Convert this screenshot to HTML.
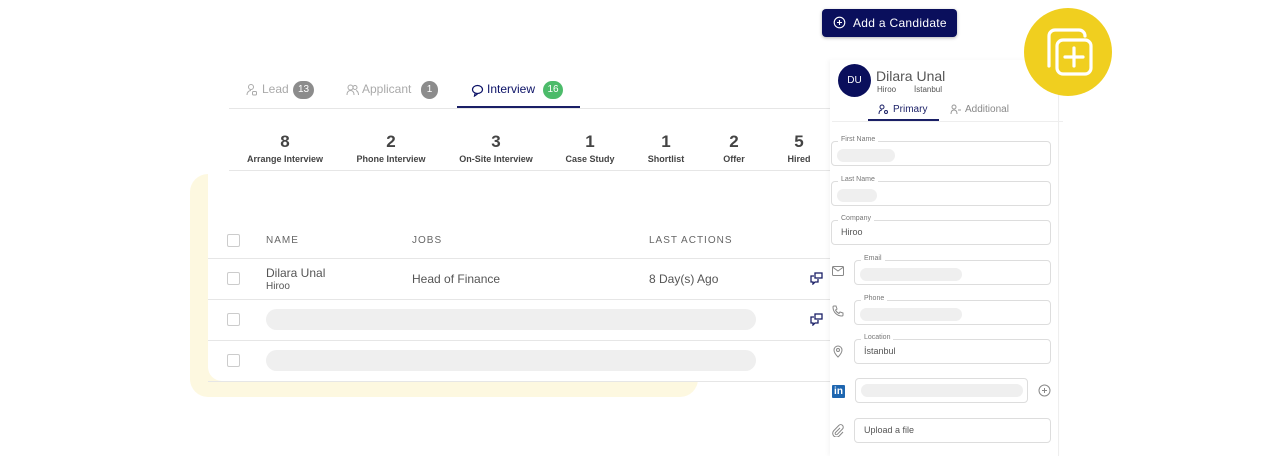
<!DOCTYPE html>
<html><head><meta charset="utf-8"><style>
*{margin:0;padding:0;box-sizing:border-box}
body{width:1270px;height:456px;background:#fff;position:relative;overflow:hidden;font-family:"Liberation Sans",sans-serif;color:#444}
.a{position:absolute}
.yl{left:190px;top:174px;width:508px;height:223px;background:#fdf8e0;border-radius:18px}
.card{left:208px;top:0;width:622px;height:381px;background:#fff;border-bottom-left-radius:14px}
.hl{height:1px;background:#e6e6e6}
.tab{font-size:12px;color:#aaa;top:82px}
.badge{top:81px;height:18px;border-radius:9px;color:#fff;font-size:10px;text-align:center;line-height:18px}
.num{font-size:17px;font-weight:bold;color:#444;top:132px;width:120px;text-align:center}
.lab{font-size:9px;font-weight:bold;color:#444;top:154px;width:120px;text-align:center}
.cb{width:13px;height:13px;border:1px solid #ccc;border-radius:2px}
.th{font-size:10px;letter-spacing:1px;color:#666;top:235px}
.pill{background:#efefef;border-radius:11px}
.fld{border:1px solid #ddd;border-radius:4px;height:25px}
.fl{font-size:7px;color:#777;background:#fff;padding:0 3px;top:-6px;left:6px;position:absolute}
.sk{position:absolute;background:#efefef;border-radius:7px;height:13px;top:7px}
</style></head><body>
<div class="a yl"></div>
<div class="a card"></div>

<!-- tabs -->
<svg class="a" style="left:246px;top:83px" width="12" height="13" viewBox="0 0 12 13" fill="none" stroke="#aaa" stroke-width="1"><circle cx="5" cy="4" r="2.5"/><path d="M1 12c0-3 2-4.5 4-4.5"/><rect x="6.5" y="8.5" width="4" height="3.5" rx="1"/></svg>
<div class="a tab" style="left:262px">Lead</div>
<div class="a badge" style="left:293px;width:21px;background:#8c8c8c">13</div>
<svg class="a" style="left:346px;top:84px" width="13" height="12" viewBox="0 0 13 12" fill="none" stroke="#aaa" stroke-width="1"><circle cx="4.5" cy="3.5" r="2.5"/><path d="M1 11c0-3 1.5-4.5 3.5-4.5S8 8 8 11"/><circle cx="9" cy="3.5" r="2"/><path d="M10 6.5c1.5.5 2.5 2 2.5 4.5"/></svg>
<div class="a tab" style="left:362px">Applicant</div>
<div class="a badge" style="left:421px;width:17px;background:#8c8c8c">1</div>
<svg class="a" style="left:471px;top:84px" width="13" height="13" viewBox="0 0 13 13" fill="none" stroke="#0b1166" stroke-width="1.2"><ellipse cx="6.5" cy="5.5" rx="5" ry="4"/><path d="M4 9.5l-.5 2.5 3-2"/></svg>
<div class="a tab" style="left:487px;color:#0b1166">Interview</div>
<div class="a badge" style="left:543px;width:20px;background:#4cbb6a">16</div>
<div class="a hl" style="left:229px;top:108px;width:601px"></div>
<div class="a" style="left:457px;top:106px;width:123px;height:2px;background:#1a1f66"></div>

<!-- stats -->
<div class="a num" style="left:225px">8</div><div class="a lab" style="left:225px">Arrange Interview</div>
<div class="a num" style="left:331px">2</div><div class="a lab" style="left:331px">Phone Interview</div>
<div class="a num" style="left:436px">3</div><div class="a lab" style="left:436px">On-Site Interview</div>
<div class="a num" style="left:530px">1</div><div class="a lab" style="left:530px">Case Study</div>
<div class="a num" style="left:606px">1</div><div class="a lab" style="left:606px">Shortlist</div>
<div class="a num" style="left:674px">2</div><div class="a lab" style="left:674px">Offer</div>
<div class="a num" style="left:739px">5</div><div class="a lab" style="left:739px">Hired</div>
<div class="a hl" style="left:229px;top:170px;width:601px"></div>

<!-- table -->
<div class="a cb" style="left:227px;top:234px"></div>
<div class="a th" style="left:266px">NAME</div>
<div class="a th" style="left:412px">JOBS</div>
<div class="a th" style="left:649px">LAST ACTIONS</div>
<div class="a hl" style="left:208px;top:258px;width:622px"></div>
<div class="a cb" style="left:227px;top:272px"></div>
<div class="a" style="left:266px;top:266px;font-size:12px;color:#555">Dilara Unal</div>
<div class="a" style="left:266px;top:281px;font-size:10px;color:#555">Hiroo</div>
<div class="a" style="left:412px;top:272px;font-size:12px;color:#555">Head of Finance</div>
<div class="a" style="left:649px;top:272px;font-size:12px;color:#555">8 Day(s) Ago</div>
<svg class="a" style="left:810px;top:272px" width="13" height="13" viewBox="0 0 13 13" fill="none" stroke="#1a1f66" stroke-width="1.3"><rect x="5" y="1" width="7" height="5"/><path d="M4 4H1v6h2v2l2-2h3V7"/></svg>
<div class="a hl" style="left:208px;top:299px;width:622px"></div>
<div class="a cb" style="left:227px;top:313px"></div>
<div class="a pill" style="left:266px;top:309px;width:490px;height:21px"></div>
<svg class="a" style="left:810px;top:313px" width="13" height="13" viewBox="0 0 13 13" fill="none" stroke="#1a1f66" stroke-width="1.3"><rect x="5" y="1" width="7" height="5"/><path d="M4 4H1v6h2v2l2-2h3V7"/></svg>
<div class="a hl" style="left:208px;top:340px;width:622px"></div>
<div class="a cb" style="left:227px;top:354px"></div>
<div class="a pill" style="left:266px;top:350px;width:490px;height:21px"></div>
<div class="a hl" style="left:208px;top:381px;width:622px"></div>

<!-- right panel -->
<div class="a" style="left:830px;top:60px;width:229px;height:396px;background:#fff;border-right:1px solid #eee;box-shadow:-2px 0 4px rgba(0,0,0,0.04)"></div>
<div class="a" style="left:822px;top:9px;width:135px;height:28px;background:#0a0f5c;border-radius:4px;color:#fff;font-size:12px;line-height:28px;padding-left:31px;letter-spacing:.3px;box-shadow:0 1px 3px rgba(0,0,0,.3)">Add a Candidate</div>
<svg class="a" style="left:833px;top:16px" width="13" height="13" viewBox="0 0 13 13" fill="none" stroke="#fff" stroke-width="1.1"><circle cx="6.5" cy="6.5" r="5.3"/><path d="M6.5 4v5M4 6.5h5"/></svg>
<div class="a" style="left:1024px;top:8px;width:88px;height:88px;border-radius:50%;background:#f0cf1f"></div>
<svg class="a" style="left:1040px;top:26px" width="54" height="54" viewBox="0 0 54 54" fill="none" stroke="#fff" stroke-width="3.2" stroke-linecap="round"><path d="M9 40V10a6 6 0 0 1 6-6h24a6 6 0 0 1 6 6"/><rect x="17" y="14" width="34" height="34" rx="6"/><path d="M34 22v18M25 31h18"/></svg>
<div class="a" style="left:838px;top:64px;width:33px;height:33px;border-radius:50%;background:#0a0f5c;color:#fff;font-size:10px;text-align:center;line-height:33px">DU</div>
<div class="a" style="left:876px;top:68px;font-size:14px;color:#555">Dilara Unal</div>
<div class="a" style="left:877px;top:85px;font-size:8px;color:#555">Hiroo</div>
<div class="a" style="left:914px;top:85px;font-size:8px;color:#555">İstanbul</div>
<svg class="a" style="left:878px;top:104px" width="11" height="11" viewBox="0 0 11 11" fill="none" stroke="#1a1f66" stroke-width="1"><circle cx="4" cy="3" r="2"/><path d="M1 10c0-3 1.5-4 3-4"/><circle cx="8" cy="8" r="1.5"/></svg>
<div class="a" style="left:893px;top:104px;font-size:10px;color:#1a1f66">Primary</div>
<svg class="a" style="left:950px;top:104px" width="11" height="11" viewBox="0 0 11 11" fill="none" stroke="#999" stroke-width="1"><circle cx="4" cy="3" r="2"/><path d="M1 10c0-3 1.5-4 3-4s3 1 3 4M8 6h3"/></svg>
<div class="a" style="left:965px;top:104px;font-size:10px;color:#888">Additional</div>
<div class="a hl" style="left:832px;top:121px;width:231px;background:#eee"></div>
<div class="a" style="left:868px;top:119px;width:71px;height:2px;background:#1a1f66"></div>

<div class="a fld" style="left:831px;top:141px;width:220px"><span class="fl">First Name</span><div class="sk" style="left:5px;width:58px"></div></div>
<div class="a fld" style="left:831px;top:181px;width:220px"><span class="fl">Last Name</span><div class="sk" style="left:5px;width:40px"></div></div>
<div class="a fld" style="left:831px;top:220px;width:220px"><span class="fl">Company</span><div style="position:absolute;left:9px;top:6px;font-size:9px;color:#555">Hiroo</div></div>
<div class="a fld" style="left:854px;top:260px;width:197px"><span class="fl">Email</span><div class="sk" style="left:5px;width:102px"></div></div>
<div class="a fld" style="left:854px;top:300px;width:197px"><span class="fl">Phone</span><div class="sk" style="left:5px;width:102px"></div></div>
<div class="a fld" style="left:854px;top:339px;width:197px"><span class="fl">Location</span><div style="position:absolute;left:9px;top:6px;font-size:9px;color:#555">İstanbul</div></div>
<div class="a fld" style="left:855px;top:378px;width:173px"><div class="sk" style="left:5px;width:162px;top:5px"></div></div>
<div class="a fld" style="left:854px;top:418px;width:197px"><div style="position:absolute;left:9px;top:6px;font-size:9px;color:#555">Upload a file</div></div>

<svg class="a" style="left:832px;top:266px" width="12" height="10" viewBox="0 0 12 10" fill="none" stroke="#888" stroke-width="1"><rect x=".5" y=".5" width="11" height="9" rx="1"/><path d="M.5 1l5.5 4 5.5-4"/></svg>
<svg class="a" style="left:832px;top:305px" width="12" height="12" viewBox="0 0 12 12" fill="none" stroke="#888" stroke-width="1"><path d="M2 1l2 0 1 3-1.5 1c.7 1.5 2 2.8 3.5 3.5L8 7l3 1v2c0 .5-.5 1-1 1C5 11 1 7 1 2c0-.5.5-1 1-1z"/></svg>
<svg class="a" style="left:833px;top:345px" width="10" height="13" viewBox="0 0 10 13" fill="none" stroke="#888" stroke-width="1"><path d="M5 12S1 8 1 5a4 4 0 0 1 8 0c0 3-4 7-4 7z"/><circle cx="5" cy="5" r="1.5"/></svg>
<div class="a" style="left:832px;top:385px;width:13px;height:13px;background:#1e66b0;color:#fff;font-size:10px;font-weight:bold;line-height:13px;text-align:center;border-radius:1px">in</div>
<svg class="a" style="left:1038px;top:384px" width="13" height="13" viewBox="0 0 13 13" fill="none" stroke="#888" stroke-width="1"><circle cx="6.5" cy="6.5" r="5.5"/><path d="M6.5 4v5M4 6.5h5"/></svg>
<svg class="a" style="left:832px;top:424px" width="12" height="13" viewBox="0 0 12 13" fill="none" stroke="#888" stroke-width="1"><path d="M8 4l-4.5 4.5a1.2 1.2 0 0 0 1.8 1.8L10.5 5a2.5 2.5 0 0 0-3.6-3.6L1.8 6.6a3.8 3.8 0 0 0 5.4 5.4L11 8"/></svg>
</body></html>
